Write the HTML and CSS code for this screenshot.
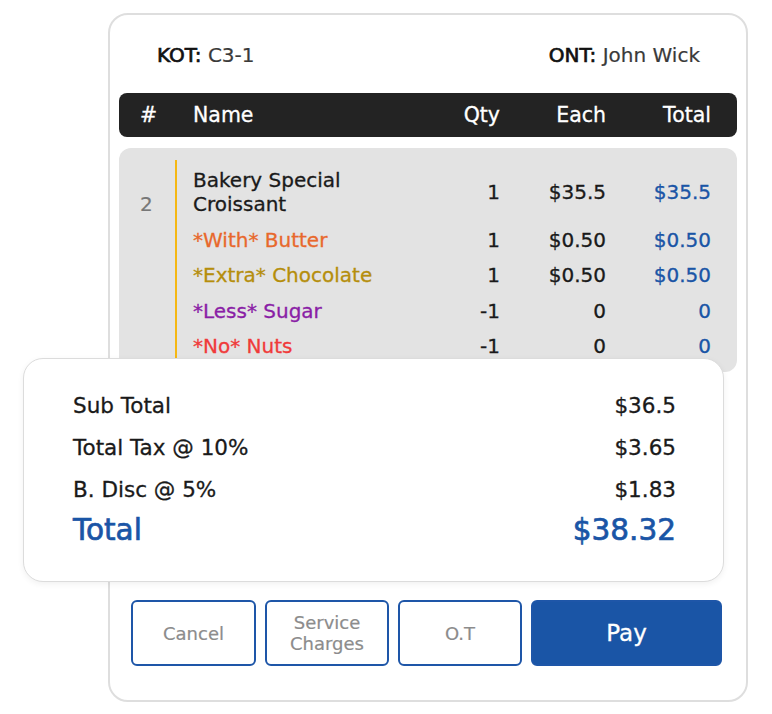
FILE: index.html
```html
<!DOCTYPE html>
<html lang="en">
<head>
<meta charset="utf-8">
<title>Order</title>
<link rel="stylesheet" href="styles.css">
</head>
<body>
<div class="stage">
  <div class="ticket">
    <div class="meta">
      <div><span class="label">KOT:</span> <span class="val">C3-1</span></div>
      <div><span class="label">ONT:</span> <span class="val">John Wick</span></div>
    </div>

    <div class="thead">
      <div class="c-num">#</div>
      <div class="c-name">Name</div>
      <div class="c-r">Qty</div>
      <div class="c-r">Each</div>
      <div class="c-r">Total</div>
    </div>

    <div class="items">
      <div class="idx">2</div>
      <div class="rows">
        <div class="row">
          <div class="name">Bakery Special<br>Croissant</div>
          <div class="r">1</div>
          <div class="r">$35.5</div>
          <div class="r blue">$35.5</div>
        </div>
        <div class="row">
          <div class="name mod-orange">*With* Butter</div>
          <div class="r">1</div>
          <div class="r">$0.50</div>
          <div class="r blue">$0.50</div>
        </div>
        <div class="row">
          <div class="name mod-gold">*Extra* Chocolate</div>
          <div class="r">1</div>
          <div class="r">$0.50</div>
          <div class="r blue">$0.50</div>
        </div>
        <div class="row">
          <div class="name mod-purple">*Less* Sugar</div>
          <div class="r">-1</div>
          <div class="r">0</div>
          <div class="r blue">0</div>
        </div>
        <div class="row">
          <div class="name mod-red">*No* Nuts</div>
          <div class="r">-1</div>
          <div class="r">0</div>
          <div class="r blue">0</div>
        </div>
      </div>
    </div>

    <div class="summary">
      <div class="srow"><span>Sub Total</span><span>$36.5</span></div>
      <div class="srow"><span>Total Tax @ 10%</span><span>$3.65</span></div>
      <div class="srow"><span>B. Disc @ 5%</span><span>$1.83</span></div>
      <div class="srow grand"><span>Total</span><span>$38.32</span></div>
    </div>

    <div class="actions">
      <button class="btn">Cancel</button>
      <button class="btn">Service<br>Charges</button>
      <button class="btn">O.T</button>
      <button class="btn pay">Pay</button>
    </div>
  </div>
</div>
</body>
</html>
```

FILE: styles.css
```css
* { box-sizing: border-box; }
html, body { margin: 0; padding: 0; background: #fff; }
body {
  font-family: "DejaVu Sans", "Noto Sans", "Liberation Sans", sans-serif;
  color: #1c1c1c;
  width: 772px;
  height: 714px;
  overflow: hidden;
}
.stage { padding: 13px 0 0 108px; }
.ticket {
  width: 640px;
  height: 689px;
  border: 2px solid #dedede;
  border-radius: 20px;
  padding: 28px 9px 0 9px;
  background: #fff;
}
.meta {
  display: flex;
  justify-content: space-between;
  padding: 0 37px 0 38px;
  font-size: 20px;
  line-height: 24px;
  height: 24px;
}
.meta .label { color: #111; -webkit-text-stroke: 0.7px #111; }
.meta .val { color: #3a3a3a; -webkit-text-stroke: 0.2px #3a3a3a; }

.thead {
  margin-top: 26px;
  height: 44px;
  background: #232323;
  border-radius: 8px;
  color: #fff;
  display: grid;
  grid-template-columns: 74px 1fr 76px 106px 105px;
  padding-right: 26px;
  align-items: center;
  font-size: 20.5px;
  -webkit-text-stroke: 0.3px #fff;
}
.thead .c-num { padding-left: 21px; }
.thead .c-r { text-align: right; }

.items {
  margin-top: 11px;
  background: #e3e3e3;
  border-radius: 12px;
  display: flex;
  padding: 12px 0 14px 0;
}
.idx {
  width: 56px;
  padding: 20px 0 0 21px;
  color: #777;
  font-size: 20px;
  line-height: 48px;
  -webkit-text-stroke: 0.2px #777;
}
.rows {
  flex: 1;
  border-left: 2px solid #f5b814;
  padding: 8px 26px 0 16px;
  display: flex;
  flex-direction: column;
  gap: 11.5px;
}
.row {
  display: grid;
  grid-template-columns: 1fr 76px 106px 105px;
  align-items: center;
  font-size: 20px;
  line-height: 24px;
  -webkit-text-stroke: 0.3px currentColor;
}
.row .r { text-align: right; color: #1a1a1a; }
.row .r.blue { color: #1a55a6; }
.name { color: #1a1a1a; }
.mod-orange { color: #e8682c; }
.mod-gold { color: #b58e0c; }
.mod-purple { color: #8a1ea6; }
.mod-red { color: #f03a3a; }

.summary {
  position: relative;
  margin: -14px 13px 0 -96px;
  height: 224px;
  background: #fff;
  border: 1.5px solid #dcdcdc;
  border-radius: 20px;
  box-shadow: 0 2px 6px rgba(0,0,0,0.06);
  padding: 35px 47px 0 49px;
  display: flex;
  flex-direction: column;
}
.srow {
  display: flex;
  justify-content: space-between;
  font-size: 21.5px;
  line-height: 24px;
  color: #1a1a1a;
  margin-bottom: 18px;
  -webkit-text-stroke: 0.3px #1a1a1a;
}
.srow.grand {
  margin-top: -8px;
  font-size: 29.5px;
  line-height: 36px;
  color: #1a55a6;
  -webkit-text-stroke: 0.7px #1a55a6;
}

.actions {
  margin: 18px 15px 0 12px;
  display: grid;
  grid-template-columns: 125px 124px 124px 1fr;
  gap: 9px;
  height: 66px;
}
.btn {
  font-family: inherit;
  border: 2px solid #1e56a8;
  background: #fff;
  border-radius: 6px;
  color: #8c8c8c;
  font-size: 18px;
  line-height: 21px;
  padding: 0;
  -webkit-text-stroke: 0.2px #8c8c8c;
}
.btn.pay {
  background: #1a55a6;
  color: #fff;
  font-size: 23px;
  -webkit-text-stroke: 0.3px #fff;
}
```
